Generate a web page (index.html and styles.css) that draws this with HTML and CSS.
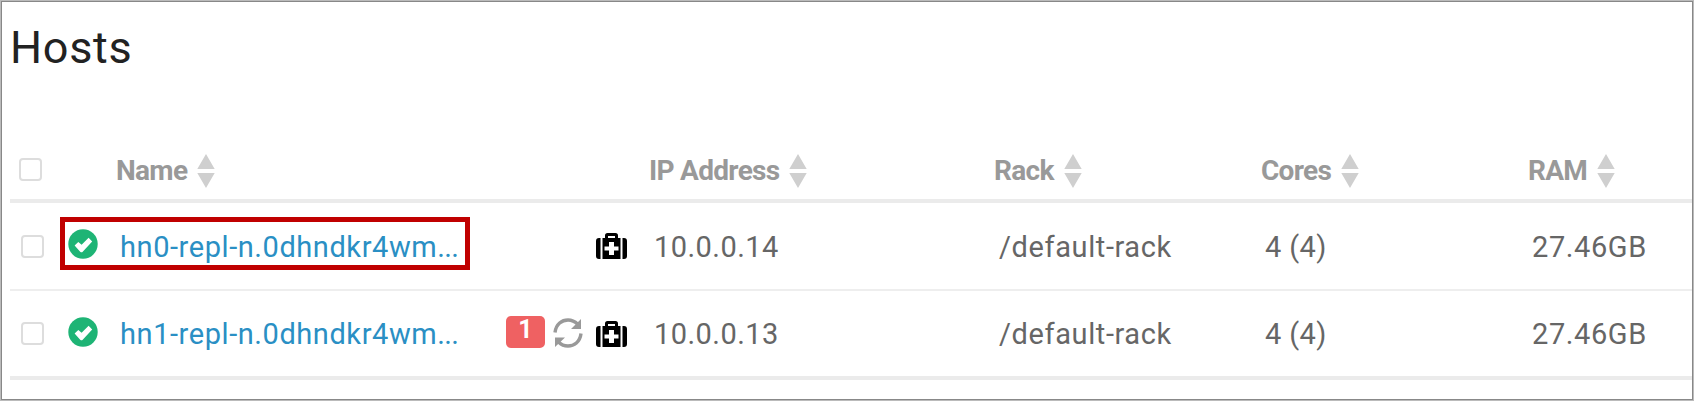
FILE: index.html
```html
<!DOCTYPE html>
<html lang="en">
<head>
<meta charset="utf-8">
<title>Hosts</title>
<link rel="stylesheet" href="styles.css">
</head>
<body>
<svg class="defs" width="0" height="0">
  <symbol id="sort" viewBox="0 0 18 34"><path d="M9 0 17.700 15H.3zM.3 19h17.400L9 34z" fill="#cfcfcf"/></symbol>
  <symbol id="ok" viewBox="0 0 30 30"><circle cx="15" cy="15" r="14.700" fill="#1eb475"/><path d="M6.600 16.500 10.300 13l3.300 2.700 7-6.900 3.600 3.600-9.500 10.300q-1.200 1-2.500 0z" fill="#fff"/></symbol>
  <symbol id="medkit" viewBox="0 0 31 26"><path d="M0 8q0-3 3-3h1.500v21H3q-3 0-3-3zM26.500 5H28q3 0 3 3v15q0 3-3 3h-1.500zM6.500 5H9V2.500Q9 0 11.500 0h8Q22 0 22 2.500V5h2.500v21h-18zM12 5h7V3h-7zM13 9v4.500H8.500v4H13V22h5v-4.500h4.500v-4H18V9z" fill="#000" fill-rule="evenodd"/></symbol>
  <symbol id="refresh" viewBox="0 0 30 30"><path d="M2 14.500C3 6 9 2 15 2c4 0 7 1.500 9.500 4M28 15.500C27 24 21 28 15 28c-4 0-7-1.500-9.500-4" fill="none" stroke="#999" stroke-width="3.400"/><path d="M28 1v10H18zM2 29V19.500h10z" fill="#999"/></symbol>
</svg>
<main class="panel">
  <h1 class="title">Hosts</h1>
  <div class="table">
    <div class="row head">
      <div class="check"><span class="box"></span></div>
      <div><span>Name</span><svg class="sort"><use href="#sort"/></svg></div>
      <div><span>IP Address</span><svg class="sort"><use href="#sort"/></svg></div>
      <div><span>Rack</span><svg class="sort"><use href="#sort"/></svg></div>
      <div><span>Cores</span><svg class="sort"><use href="#sort"/></svg></div>
      <div><span>RAM</span><svg class="sort"><use href="#sort"/></svg></div>
    </div>
    <div class="row">
      <div class="check"><span class="box"></span></div>
      <div class="host marked"><svg class="ok"><use href="#ok"/></svg><a class="link">hn0-repl-n.0dhndkr4wm<span class="dots">...</span></a></div>
      <div class="tools"><svg class="medkit"><use href="#medkit"/></svg></div>
      <div class="ip">10.0.0.14</div>
      <div class="rack">/default-rack</div>
      <div class="cores">4 (4)</div>
      <div class="ram">27.46GB</div>
    </div>
    <div class="row last">
      <div class="check"><span class="box"></span></div>
      <div class="host"><svg class="ok"><use href="#ok"/></svg><a class="link">hn1-repl-n.0dhndkr4wm<span class="dots">...</span></a></div>
      <div class="tools"><span class="badge">1</span><svg class="refresh"><use href="#refresh"/></svg><svg class="medkit"><use href="#medkit"/></svg></div>
      <div class="ip">10.0.0.13</div>
      <div class="rack">/default-rack</div>
      <div class="cores">4 (4)</div>
      <div class="ram">27.46GB</div>
    </div>
  </div>
</main>
</body>
</html>
```
FILE: styles.css
```css
* { box-sizing: border-box; }
html, body { margin: 0; height: 100%; }
body {
  background: #fff;
  border: 1px solid #bbb;
  font-family: Roboto, sans-serif;
  font-size: 29px;
  color: #666;
  overflow: hidden;
}
.defs { position: absolute; }
.panel { height: 399px; border: 1px solid #888; padding-left: 8px; }
.title {
  margin: 0;
  height: 141px;
  font-size: 45px;
  line-height: 91px;
  font-weight: 400;
  letter-spacing: 0.7px;
  color: #222;
}
.row {
  display: grid;
  grid-template-columns: 50px 411px 174px 344px 267px 267px 1fr;
  align-items: center;
  height: 88px;
  border-bottom: 2px solid #eee;
  white-space: nowrap;
  line-height: 40px;
}
.row.last { height: 89px; border-bottom: 4px solid #ebebeb; }
.row.head {
  grid-template-columns: 106px 533px 345px 267px 267px 1fr;
  height: 60px;
  border-bottom: 4px solid #ebebeb;
  color: #999;
  font-weight: 700;
  font-size: 28px;
  letter-spacing: -0.7px;
}
.row.head > div { display: flex; align-items: center; }
.check { padding-left: 11px; }
.row.head .check { padding: 0 0 4px 9px; }
.box { display: block; width: 23px; height: 23px; border: 2px solid #ddd; border-radius: 4px; }
.sort { width: 18px; height: 34px; margin: -1px 0 0 10px; }
.host {
  display: flex;
  align-items: center;
  height: 53px;
  width: 410px;
  margin-top: -6px;
  border: 5px solid transparent;
  padding: 6px 0 0 3px;
}
.marked { border-color: #c00000; }
.ok { width: 30px; height: 30px; margin: -4px 22px 0 0; flex: none; }
.link { color: #2a8fc4; letter-spacing: 0.57px; padding-top: 1px; }
.dots { letter-spacing: -0.6px; }
.tools { display: flex; align-items: center; justify-content: flex-end; padding-right: 18px; }
.medkit { width: 31px; height: 26px; }
.refresh { width: 30px; height: 30px; margin: -1px 13px 0 0; }
.badge {
  width: 39px;
  height: 32px;
  margin: -4px 8px 0 0;
  border-radius: 5px;
  background: #ef6162;
  color: #fff;
  font-size: 25px;
  font-weight: 700;
  line-height: 27px;
  text-align: center;
}
.ip, .rack, .cores, .ram { padding: 1px 0 0 10px; }
.ip { padding-left: 9px; letter-spacing: 0.45px; }
.rack { letter-spacing: 0.6px; }
.cores { padding-left: 9px; letter-spacing: 0.4px; }
.ram { padding-left: 9px; letter-spacing: 0.6px; }
```
